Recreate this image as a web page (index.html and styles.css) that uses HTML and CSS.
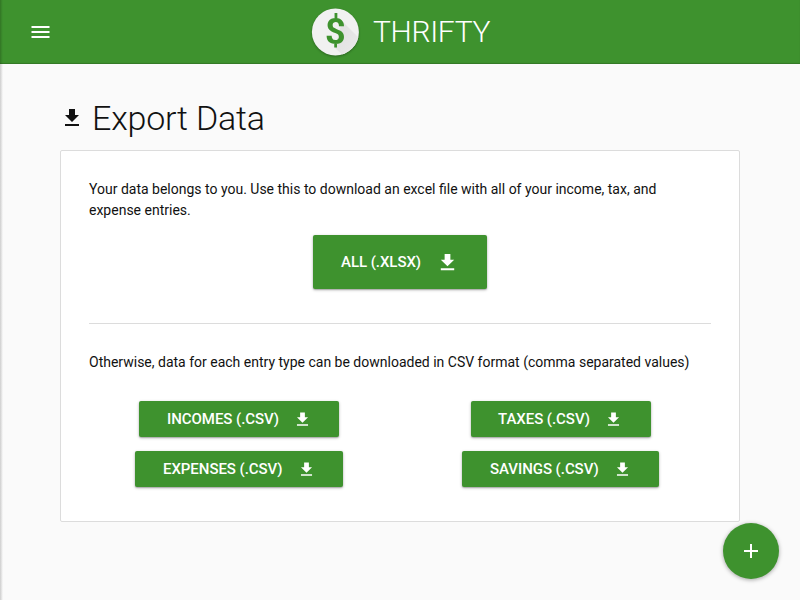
FILE: index.html
```html
<!DOCTYPE html>
<html lang="en">
<head>
<meta charset="utf-8">
<title>Thrifty – Export Data</title>
<link rel="stylesheet" href="styles.css">
</head>
<body>
<svg width="0" height="0" class="defs" aria-hidden="true">
  <symbol id="download" viewBox="0 0 24 24"><path d="M19 9h-4V3H9v6H5l7 7 7-7zM5 18v2h14v-2H5z"/></symbol>
</svg>
<header class="bar">
  <svg class="menu" viewBox="0 0 24 24"><path d="M3 18h18v-2H3v2zm0-5h18v-2H3v2zm0-7v2h18V6H3z"/></svg>
  <div class="brand">
    <svg class="logo" viewBox="0 0 48 48">
      <defs>
        <linearGradient id="shade" x1="0" y1="0" x2="1" y2="1"><stop offset="0" stop-color="#dedede"/><stop offset="1" stop-color="#ececec"/></linearGradient>
        <clipPath id="disc"><circle cx="24.4" cy="24" r="23.5"/></clipPath>
      </defs>
      <circle cx="24.4" cy="24" r="23.5" fill="#f1f1f1"/>
      <path d="M31 13L50 32V50H35L24 40z" fill="url(#shade)" clip-path="url(#disc)"/>
      <text x="24.4" y="36.1" text-anchor="middle" class="dollar">$</text>
    </svg>
    <span class="name">THRIFTY</span>
  </div>
</header>
<main class="page">
  <h1 class="title"><svg class="icon"><use href="#download"/></svg><span>Export Data</span></h1>
  <section class="card">
    <p class="text">Your data belongs to you. Use this to download an excel file with all of your income, tax, and expense entries.</p>
    <button class="btn all"><span>ALL (.XLSX)</span><svg class="icon"><use href="#download"/></svg></button>
    <hr class="rule">
    <p class="text">Otherwise, data for each entry type can be downloaded in CSV format (comma separated values)</p>
    <div class="grid">
      <button class="btn incomes"><span>INCOMES (.CSV)</span><svg class="icon"><use href="#download"/></svg></button>
      <button class="btn taxes"><span>TAXES (.CSV)</span><svg class="icon"><use href="#download"/></svg></button>
      <button class="btn expenses"><span>EXPENSES (.CSV)</span><svg class="icon"><use href="#download"/></svg></button>
      <button class="btn savings"><span>SAVINGS (.CSV)</span><svg class="icon"><use href="#download"/></svg></button>
    </div>
  </section>
</main>
<button class="fab" aria-label="Add"><svg viewBox="0 0 24 24"><path d="M19 13h-6v6h-2v-6H5v-2h6V5h2v6h6v2z"/></svg></button>
<div class="edge"></div>
</body>
</html>
```
FILE: styles.css
```css
* { box-sizing: border-box; }
body {
  margin: 0;
  height: 600px;
  overflow: hidden;
  background: #fafafa;
  color: #111;
  font-family: Roboto, sans-serif;
}
svg { display: block; fill: currentColor; flex: none; }
.defs { position: absolute; }
.bar {
  position: relative;
  display: flex;
  align-items: center;
  justify-content: center;
  height: 64px;
  background: #3e922e;
  color: #fff;
  box-shadow: inset 0 -1px 1px rgba(0, 0, 0, .18);
}
.menu { position: absolute; left: 28px; top: 20px; width: 25px; height: 24px; }
.brand { display: flex; align-items: center; width: 178px; }
.logo { width: 48px; height: 48px; overflow: visible; filter: drop-shadow(0 1px 1px rgba(0, 0, 0, .3)); }
.dollar { font: 700 36px Roboto, sans-serif; fill: #3e922e; }
.name { margin-left: 14px; font-size: 30px; font-weight: 300; line-height: 48px; letter-spacing: -.35px; white-space: nowrap; }
.page { padding: 31px 60px 0; }
.title {
  display: flex;
  align-items: center;
  height: 46px;
  margin: 0 0 9px;
  font-size: 34px;
  font-weight: 300;
  letter-spacing: -.2px;
  white-space: nowrap;
}
.title .icon { width: 24px; height: 24px; margin-right: 8px; }
.card {
  height: 372px;
  padding: 28px;
  background: #fff;
  border: 1px solid #dcdcdc;
  border-radius: 2px;
}
.text { margin: 0; font-size: 14px; line-height: 21px; }
.btn {
  display: flex;
  align-items: center;
  justify-content: space-between;
  height: 36px;
  margin: 0;
  padding: 0 27px 0 28px;
  border: 0;
  border-radius: 2px;
  background: #3e922e;
  color: #fff;
  font: 500 15px Roboto, sans-serif;
  letter-spacing: -.05px;
  white-space: nowrap;
  box-shadow: 0 1px 3px rgba(0, 0, 0, .3), 0 1px 1px rgba(0, 0, 0, .14);
}
.btn .icon { width: 19px; height: 19px; }
.all { width: 174px; height: 54px; margin: 14px auto 0; padding-right: 28px; }
.all .icon { width: 23px; height: 23px; }
.rule { height: 1px; margin: 34px 0 28px; border: 0; background: #dcdcdc; }
.grid {
  display: grid;
  grid-template-columns: 300px 300px;
  justify-items: center;
  gap: 14px 22px;
  margin-top: 28px;
}
.incomes { width: 200px; }
.taxes { width: 180px; padding-left: 27px; padding-right: 28px; }
.expenses { width: 208px; }
.savings { width: 197px; margin-right: 1px; }
.fab {
  position: absolute;
  left: 723px;
  top: 523px;
  display: flex;
  align-items: center;
  justify-content: center;
  width: 56px;
  height: 56px;
  padding: 0;
  border: 0;
  border-radius: 50%;
  background: #3e922e;
  color: #fff;
  box-shadow: 0 1px 4px rgba(0, 0, 0, .35);
}
.fab svg { width: 24px; height: 24px; }
.edge {
  position: absolute;
  left: 0;
  top: 0;
  width: 3px;
  height: 600px;
  background: linear-gradient(90deg, rgba(0, 0, 0, .18), rgba(0, 0, 0, 0));
}
```
